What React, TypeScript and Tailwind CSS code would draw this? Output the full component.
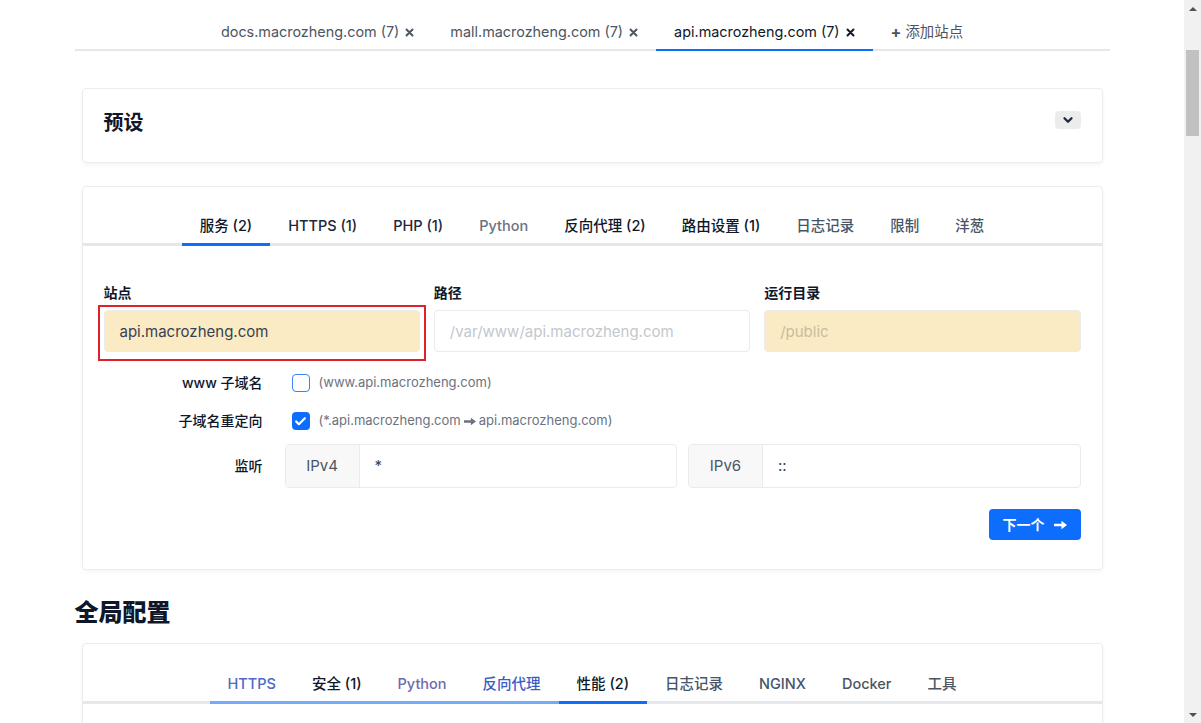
import { ChevronDown, Check } from 'lucide-react';

const siteTabs = [
  { label: 'docs.macrozheng.com (7)', active: false },
  { label: 'mall.macrozheng.com (7)', active: false },
  { label: 'api.macrozheng.com (7)', active: true },
];

const serviceTabs = [
  { label: '服务 (2)', color: 'text-[#0f172a]', active: true },
  { label: 'HTTPS (1)', color: 'text-[#1e293b]' },
  { label: 'PHP (1)', color: 'text-[#1e293b]' },
  { label: 'Python', color: 'text-[#6b7280]' },
  { label: '反向代理 (2)', color: 'text-[#0f172a]' },
  { label: '路由设置 (1)', color: 'text-[#0f172a]' },
  { label: '日志记录', color: 'text-[#475569]' },
  { label: '限制', color: 'text-[#475569]' },
  { label: '洋葱', color: 'text-[#475569]' },
];

const globalTabs = [
  { label: 'HTTPS', color: 'text-[#4d6bc6]', line: 'border-[#74abf9]' },
  { label: '安全 (1)', color: 'text-[#111827]', line: 'border-[#74abf9]' },
  { label: 'Python', color: 'text-[#7169b0]', line: 'border-[#74abf9]' },
  { label: '反向代理', color: 'text-[#3a5cc5]', line: 'border-[#74abf9]' },
  { label: '性能 (2)', color: 'text-[#111827]', line: 'border-[#0d6efd]' },
  { label: '日志记录', color: 'text-[#475569]', line: 'border-transparent' },
  { label: 'NGINX', color: 'text-[#475569]', line: 'border-transparent' },
  { label: 'Docker', color: 'text-[#4b5563]', line: 'border-transparent' },
  { label: '工具', color: 'text-[#4b5563]', line: 'border-transparent' },
];

function CloseMark() {
  return (
    <svg width="9" height="9" viewBox="0 0 9 9" className="ml-[6px]">
      <path d="M1.5 1.5 L7.5 7.5 M7.5 1.5 L1.5 7.5" stroke="currentColor" strokeWidth="2" strokeLinecap="round" />
    </svg>
  );
}

// heavy triangle-headed arrow, like ➞
function HeavyArrow({ w, h, className }: { w: number; h: number; className?: string }) {
  return (
    <svg width={w} height={h} viewBox="0 0 14 10" className={className}>
      <path d="M0 3.6 H8 V0.5 L14 5 L8 9.5 V6.4 H0 Z" fill="currentColor" />
    </svg>
  );
}

function Field({ label, value, placeholder, yellow, marked }: { label: string; value?: string; placeholder?: string; yellow?: boolean; marked?: boolean }) {
  return (
    <div className="flex flex-col">
      <div className="mb-[7px] text-sm font-semibold leading-5 text-[#0f172a]">{label}</div>
      <div className="relative">
        {marked && <span className="absolute -left-[6px] -right-[6px] -top-[5px] -bottom-[9px] border-2 border-[#e0202a]" />}
        <div
          className={
            'flex h-[42px] items-center rounded border border-[#ebebeb] px-[15px] pt-[3px] text-[15px] ' +
            (yellow ? 'bg-[#faebc4] ' : 'bg-white ') +
            (value ? 'text-[#374151]' : yellow ? 'text-[#c9bb9c]' : 'text-[#c4c7cc]')
          }
        >
          {value ?? placeholder}
        </div>
      </div>
    </div>
  );
}

function Box({ checked }: { checked?: boolean }) {
  return checked ? (
    <span className="ml-[6px] flex h-[18px] w-[18px] items-center justify-center rounded-[4px] bg-[#0d6efd]">
      <Check size={13} strokeWidth={4} className="text-white" />
    </span>
  ) : (
    <span className="ml-[6px] h-[18px] w-[18px] rounded-[4px] border-[1.5px] border-[#3b82f6] bg-white" />
  );
}

function IpGroup({ tag, value }: { tag: string; value: string }) {
  return (
    <div className="flex h-[44px] flex-1 overflow-hidden rounded border border-[#ebebeb]">
      <div className="flex w-[74px] items-center justify-center border-r border-[#ebebeb] bg-[#f8f8f8] text-[15px] text-[#4b5563]">{tag}</div>
      <div className="flex items-center px-[15px] text-[15px] text-[#374151]">{value}</div>
    </div>
  );
}

export default function App() {
  return (
    <div className="flex h-[723px] overflow-hidden bg-white font-[Inter,'Noto_Sans_CJK_SC',sans-serif]">
      <main className="flex-1">
        <div className="mx-auto w-[1035px]">
          <div className="flex justify-center border-b-2 border-[#e5e7eb]">
            {siteTabs.map((t) => (
              <div
                key={t.label}
                className={
                  '-mb-[2px] flex items-center border-b-2 px-[18px] pt-[22px] pb-[7px] text-[14.4px] leading-5 ' +
                  (t.active ? 'border-[#0d6efd] text-[#111827]' : 'border-transparent text-[#4b5563]')
                }
              >
                {t.label}
                <CloseMark />
              </div>
            ))}
            <div className="-mb-[2px] flex items-center border-b-2 border-transparent px-[18px] pt-[22px] pb-[7px] text-[14.4px] leading-5 text-[#4b5563]">
              <span className="mr-[4px] text-base font-bold leading-5">+</span>添加站点
            </div>
          </div>

          <section className="mx-[7px] mt-[37px] flex h-[75px] items-center justify-between rounded border border-[#ececec] px-[21px] pb-[6px] shadow-[0_2px_4px_rgba(0,0,0,0.04)]">
            <h2 className="text-[20px] font-bold leading-7 text-[#0f172a]">预设</h2>
            <button className="mb-[5px] flex h-[18px] w-[26px] items-center justify-center rounded bg-[#ececec]">
              <ChevronDown size={14} strokeWidth={4} className="text-[#1f2937]" />
            </button>
          </section>

          <section className="mx-[7px] mt-[23px] rounded border border-[#ececec] shadow-[0_2px_4px_rgba(0,0,0,0.04)]">
            <div className="flex justify-center border-b-[3px] border-[#e5e7eb] pt-[29px]">
              {serviceTabs.map((t) => (
                <div
                  key={t.label}
                  className={
                    '-mb-[3px] border-b-[3px] px-[18px] pb-[7px] text-[14.5px] font-medium leading-5 ' +
                    t.color +
                    (t.active ? ' border-[#0d6efd]' : ' border-transparent')
                  }
                >
                  {t.label}
                </div>
              ))}
            </div>

            <div className="px-[21px] pt-[37px] pb-[29px]">
              <div className="grid grid-cols-3 gap-[14px]">
                <Field label="站点" value="api.macrozheng.com" yellow marked />
                <Field label="路径" placeholder="/var/www/api.macrozheng.com" />
                <Field label="运行目录" placeholder="/public" yellow />
              </div>

              <div className="mt-[19px] flex h-[24px] items-center">
                <div className="w-[159px] text-right text-sm font-medium text-[#0f172a]">www 子域名</div>
                <div className="ml-[23px] flex items-center">
                  <Box />
                  <span className="ml-[9px] text-[13px] text-[#6b7280]">(www.api.macrozheng.com)</span>
                </div>
              </div>

              <div className="mt-[14px] flex h-[24px] items-center">
                <div className="w-[159px] text-right text-sm font-medium text-[#0f172a]">子域名重定向</div>
                <div className="ml-[23px] flex items-center">
                  <Box checked />
                  <span className="ml-[9px] flex items-center text-[13px] text-[#6b7280]">
                    (*.api.macrozheng.com
                    <HeavyArrow w={12} h={9} className="mx-[3px]" />
                    api.macrozheng.com)
                  </span>
                </div>
              </div>

              <div className="mt-[11px] flex items-center">
                <div className="w-[159px] text-right text-sm font-medium text-[#0f172a]">监听</div>
                <div className="ml-[22px] flex flex-1 gap-[11px]">
                  <IpGroup tag="IPv4" value="*" />
                  <IpGroup tag="IPv6" value="::" />
                </div>
              </div>

              <div className="mt-[21px] flex justify-end">
                <button className="flex h-[31px] w-[92px] items-center justify-center gap-[9px] rounded bg-[#0d6efd] text-sm font-semibold text-white">
                  下一个
                  <HeavyArrow w={13} h={10} />
                </button>
              </div>
            </div>
          </section>

          <h1 className="mt-[27px] mb-[14px] text-2xl font-extrabold leading-8 text-[#0f172a]">全局配置</h1>

          <section className="mx-[7px] h-[200px] rounded border border-[#ececec] shadow-[0_2px_4px_rgba(0,0,0,0.04)]">
            <div className="flex justify-center border-b-[3px] border-[#e5e7eb] pt-[30px]">
              {globalTabs.map((t) => (
                <div
                  key={t.label}
                  className={'-mb-[3px] border-b-[3px] px-[18px] pb-[7px] text-[14.5px] font-medium leading-5 ' + t.color + ' ' + t.line}
                >
                  {t.label}
                </div>
              ))}
            </div>
          </section>
        </div>
      </main>

      <div className="flex w-[17px] flex-col bg-[#f1f1f1]">
        <div className="flex h-[17px] items-center justify-center">
          <span className="h-0 w-0 border-x-[4px] border-b-[4px] border-x-transparent border-b-[#505050]" />
        </div>
        <div className="mt-[33px] mx-[2px] h-[86px] bg-[#c1c1c1]" />
        <div className="flex-1" />
        <div className="flex h-[17px] items-center justify-center">
          <span className="h-0 w-0 border-x-[4px] border-t-[4px] border-x-transparent border-t-[#505050]" />
        </div>
      </div>
    </div>
  );
}
